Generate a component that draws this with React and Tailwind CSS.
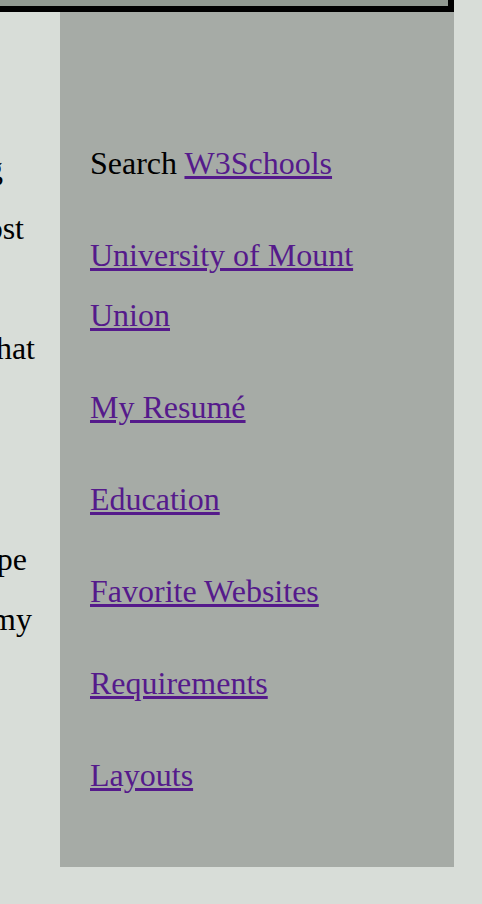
export default function App() {
  const links = [
    'University of Mount Union',
    'My Resumé',
    'Education',
    'Favorite Websites',
    'Requirements',
    'Layouts',
  ];

  // visible tail of each line in the main column (the rest is off to the left)
  const para1 = [
    { text: 'web programming', w: 'w-[3px]' },
    { text: 'things I enjoy most', w: 'w-[24px]' },
    { text: '', w: 'w-[0px]' },
    { text: 'one of the things that', w: 'w-[35px]' },
    { text: '', w: 'w-[0px]' },
    { text: '', w: 'w-[0px]' },
  ];
  const para2 = [
    { text: 'this page, and I hope', w: 'w-[27px]' },
    { text: 'you like my', w: 'w-[32px]' },
  ];

  return (
    <div className="min-h-[904px] w-[482px] overflow-hidden bg-[#d8ddd8] font-['Liberation_Serif',serif] text-[32px] text-black">
      <div className="h-[12px] w-[454px] border-b-[6px] border-r-[6px] border-black bg-[#919991]" />
      <div className="flex">
        <div className="w-[60px] shrink-0 overflow-hidden pt-[126px]">
          {para1.map((l, i) => (
            <div key={i} className={`flex h-[60px] justify-end whitespace-nowrap leading-[60px] ${l.w}`}>
              {l.text}
            </div>
          ))}
          <div className="mt-[31px]">
            {para2.map((l, i) => (
              <div key={i} className={`flex h-[60px] justify-end whitespace-nowrap leading-[60px] ${l.w}`}>
                {l.text}
              </div>
            ))}
          </div>
        </div>
        <div className="w-[394px] shrink-0 bg-[#a6aba6] pb-[62px] pl-[30px] pr-[30px] pt-[121px] leading-[60px]">
          <div className="flex flex-col gap-[32px]">
            <div>
              Search{' '}
              <a href="#" className="text-[#551a8b] underline">
                W3Schools
              </a>
            </div>
            {links.map((l) => (
              <div key={l}>
                <a href="#" className="text-[#551a8b] underline">
                  {l}
                </a>
              </div>
            ))}
          </div>
        </div>
      </div>
    </div>
  );
}
